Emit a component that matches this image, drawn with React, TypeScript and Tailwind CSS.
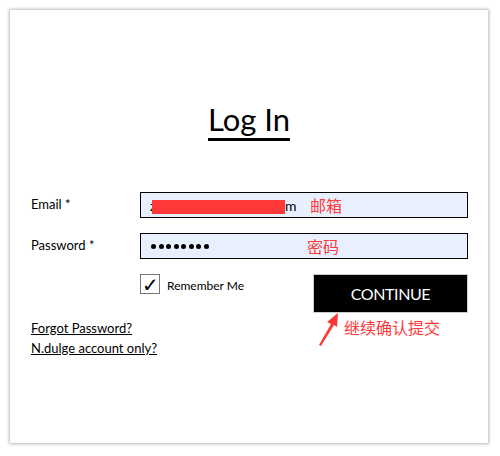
import React from 'react';

const font = { fontFamily: '"Lato", "Liberation Sans", sans-serif' };
const cjk = { fontFamily: '"Noto Sans CJK SC", sans-serif' };

function Dots() {
  return (
    <div className="flex gap-[2.5px]">
      {Array.from({ length: 8 }).map((_, i) => (
        <span key={i} className="block h-[5px] w-[5px] rounded-full bg-black" />
      ))}
    </div>
  );
}

export default function App() {
  return (
    <div className="h-[456px] w-[500px] bg-white pl-[10px] pt-[10px]" style={font}>
      <div className="relative flex h-[433px] w-[478px] flex-col bg-white shadow-[0_0_3px_1px_rgba(0,0,0,0.28)]">
        <div className="mt-[91px] flex justify-center">
          <h1 className="border-b-[3px] border-black pb-[1px] text-[31px] leading-[36px] text-black">Log In</h1>
        </div>

        <div className="mt-[51px] flex flex-col gap-[15px] pl-[21px] pr-[20px] text-[13px] text-black">
          <div className="flex items-center">
            <span className="w-[109px]">Email *</span>
            <div className="relative flex h-[26px] flex-1 items-center border-[1.5px] border-black bg-[#e8f0fe] pl-[9px]">
              <span className="text-[14px]">z</span>
              <span className="absolute left-[11px] top-[6.5px] block h-[14px] w-[133px] bg-[#ff3838]" />
              <span className="absolute left-[144px] text-[14px]">m</span>
              <span className="absolute left-[169px] text-[16px] text-[#ff3838]" style={cjk}>邮箱</span>
            </div>
          </div>
          <div className="flex items-center">
            <span className="w-[109px]">Password *</span>
            <div className="relative flex h-[26px] flex-1 items-center border-[1.5px] border-black bg-[#e8f0fe] pl-[10px]">
              <Dots />
              <span className="absolute left-[166px] text-[16px] text-[#ff3838]" style={cjk}>密码</span>
            </div>
          </div>
        </div>

        <div className="mt-[15px] flex pl-[130px] pr-[20px]">
          <label className="flex items-start gap-[7px]">
            <span className="flex h-[20px] w-[20px] items-center justify-center border border-[#777] text-[20px] leading-none text-black">
              ✓
            </span>
            <span className="mt-[3px] text-[12px] text-black">Remember Me</span>
          </label>
          <button className="ml-auto h-[39px] w-[155px] border border-[#ccc] bg-black text-[16px] tracking-tight text-white">
            CONTINUE
          </button>
        </div>

        <div className="mt-[5px] flex flex-col pl-[21px] text-[13px] leading-[20px] text-black">
          <a className="w-fit underline">Forgot Password?</a>
          <a className="w-fit underline">N.dulge account only?</a>
        </div>

        <span className="absolute left-[334px] top-[305px] text-[16px] text-[#ff3838]" style={cjk}>
          继续确认提交
        </span>
        <svg className="absolute left-[305px] top-[300px]" width="36" height="38" viewBox="0 0 36 38">
          <path d="M4 35 L16 14 L12 12 L23 3 L22 17 L19 15 L6 36 Z" fill="#ff3838" />
        </svg>
      </div>
    </div>
  );
}
